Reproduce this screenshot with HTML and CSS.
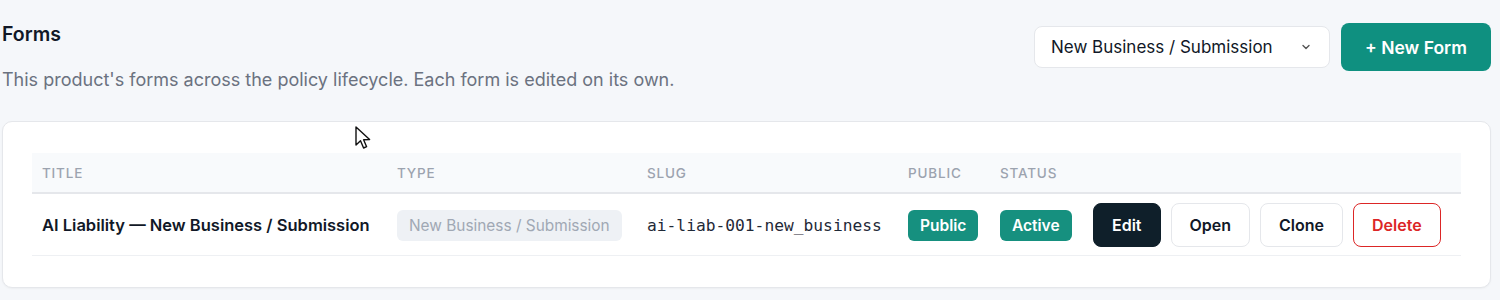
FILE: index.html
```html
<!DOCTYPE html>
<html lang="en">
<head>
<meta charset="utf-8">
<title>Forms</title>
<link rel="stylesheet" href="styles.css">
</head>
<body>
<div class="page">
  <header class="page-head">
    <div class="intro">
      <h2 class="title">Forms</h2>
      <p class="subtitle">This product's forms across the policy lifecycle. Each form is edited on its own.</p>
    </div>
    <div class="tools">
      <div class="select">
        <span>New Business / Submission</span>
        <svg class="chev" width="12" height="12" viewBox="0 0 12 12"><path d="M3 4.5 6 7.5 9 4.5" fill="none" stroke="#555" stroke-width="1.4" stroke-linecap="round" stroke-linejoin="round"/></svg>
      </div>
      <button class="btn-primary">+ New Form</button>
    </div>
  </header>

  <section class="card">
    <table class="grid">
      <colgroup>
        <col class="w-title"><col class="w-type"><col class="w-slug"><col class="w-pub"><col class="w-status"><col>
      </colgroup>
      <thead>
        <tr>
          <th>Title</th>
          <th>Type</th>
          <th>Slug</th>
          <th>Public</th>
          <th>Status</th>
          <th></th>
        </tr>
      </thead>
      <tbody>
        <tr>
          <td class="strong">AI Liability — New Business / Submission</td>
          <td><span class="pill">New Business / Submission</span></td>
          <td class="mono">ai-liab-001-new_business</td>
          <td><span class="badge">Public</span></td>
          <td><span class="badge">Active</span></td>
          <td>
            <div class="actions">
              <button class="btn btn-dark">Edit</button>
              <button class="btn btn-light">Open</button>
              <button class="btn btn-light">Clone</button>
              <button class="btn btn-danger">Delete</button>
            </div>
          </td>
        </tr>
      </tbody>
    </table>
  </section>

  <svg class="cursor" width="22" height="26" viewBox="0 0 22 26"><path d="M2 1 L2 19 L6.5 14.8 L9.6 22 L12.6 20.7 L9.6 13.8 L15.6 13.6 Z" fill="#fff" stroke="#111" stroke-width="1.4" stroke-linejoin="round"/></svg>
</div>
</body>
</html>
```

FILE: styles.css
```css
* { box-sizing: border-box; }
html, body { margin: 0; padding: 0; }
body {
  background: #f5f7fa;
  font-family: Inter, "Noto Sans", "Liberation Sans", sans-serif;
  color: #111827;
  width: 1500px;
  height: 300px;
  overflow: hidden;
}
.page {
  position: relative;
  padding: 20px 9px 0 2px;
}
.page-head {
  display: flex;
  justify-content: space-between;
  align-items: flex-start;
}
.title {
  margin: 0;
  font-size: 19.5px;
  line-height: 28px;
  font-weight: 600;
  color: #111827;
}
.subtitle {
  margin: 19px 0 0;
  font-size: 18px;
  line-height: 26px;
  color: #6b7280;
}
.tools {
  display: flex;
  align-items: center;
  gap: 11px;
  margin-top: 3px;
}
.select {
  width: 296px;
  height: 42px;
  background: #fff;
  border: 1px solid #e5e7eb;
  border-radius: 8px;
  display: flex;
  align-items: center;
  justify-content: space-between;
  padding: 0 17px 0 16px;
  font-size: 17px;
  color: #111827;
}
.chev { display: block; }
.btn-primary {
  width: 150px;
  height: 48px;
  background: #0f9080;
  color: #fff;
  border: none;
  border-radius: 8px;
  font-family: inherit;
  font-size: 17.5px;
  font-weight: 600;
}
.card {
  margin-top: 28px;
  background: #fff;
  border: 1px solid #e5e7eb;
  border-radius: 10px;
  padding: 31px 29px 31px 29px;
  box-shadow: 0 1px 2px rgba(0,0,0,0.04);
}
.grid {
  width: 100%;
  border-collapse: collapse;
  table-layout: fixed;
}
.w-title { width: 355px; }
.w-type { width: 250px; }
.w-slug { width: 261px; }
.w-pub { width: 92px; }
.w-status { width: 93px; }
.grid thead tr {
  background: #f8fafc;
  border-bottom: 2px solid #e5e7eb;
}
.grid th {
  height: 40px;
  text-align: left;
  font-size: 13.5px;
  font-weight: 500;
  letter-spacing: 0.06em;
  text-transform: uppercase;
  color: #9ca3af;
  padding: 0 10px;
}
.grid td {
  height: 62px;
  padding: 2px 10px 0;
  font-size: 15px;
  border-bottom: 1px solid #eef0f3;
  white-space: nowrap;
}
.grid td.strong { font-weight: 600; font-size: 16.5px; color: #111827; }
.pill {
  display: inline-block;
  background: #eef1f5;
  color: #a0a8b4;
  border-radius: 6px;
  padding: 0 12px;
  line-height: 31px;
  font-size: 15.4px;
}
.grid td.mono {
  font-family: "DejaVu Sans Mono", "Liberation Mono", monospace;
  font-size: 16.25px;
  color: #1f2937;
}
.badge {
  display: inline-block;
  background: #16907f;
  color: #fff;
  font-weight: 600;
  font-size: 15.5px;
  line-height: 31px;
  padding: 0 12px;
  border-radius: 6px;
}
.actions {
  display: flex;
  gap: 10px;
}
.btn {
  height: 44px;
  padding: 0 18px;
  border-radius: 8px;
  font-family: inherit;
  font-size: 16px;
  font-weight: 600;
  background: #fff;
  border: 1px solid #e5e7eb;
  color: #111827;
}
.btn-dark {
  background: #0f1f2a;
  border-color: #0f1f2a;
  color: #fff;
  padding: 0 18px;
}
.btn-danger {
  border-color: #dc2626;
  color: #dc2626;
  padding: 0 18px;
}
.cursor {
  position: absolute;
  left: 354px;
  top: 126px;
}
```
